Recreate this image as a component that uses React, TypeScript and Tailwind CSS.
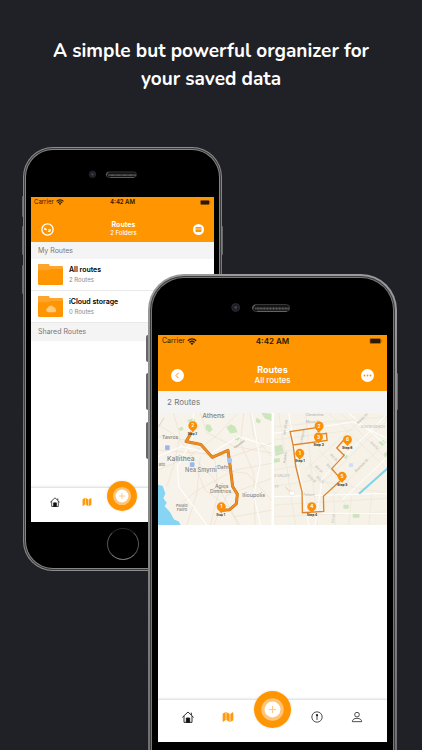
import type { ReactNode } from "react";
import clsx from "clsx";

type Size = "sm" | "lg";

export default function App() {
  return (
    <main className="h-screen overflow-hidden bg-[#202126] font-['Inter',sans-serif]">
      <h1 className="mx-auto max-w-[340px] pt-[37px] text-center font-['Nunito','Arial_Rounded_MT_Bold','Liberation_Sans',sans-serif] text-[19px] leading-7 font-bold text-white">
        A simple but powerful organizer for your saved data
      </h1>
      <div className="mx-auto mt-[54px] grid w-[376px] items-start">
        <Phone size="sm" className="col-start-1 row-start-1 justify-self-start">
          <FoldersScreen />
        </Phone>
        <Phone size="lg" className="z-10 col-start-1 row-start-1 mt-[127px] mr-0.5 justify-self-end">
          <MapsScreen />
        </Phone>
      </div>
    </main>
  );
}

function Phone({ size, className, children }: { size: Size; className: string; children: ReactNode }) {
  const lg = size === "lg";
  return (
    <div
      className={clsx(
        "relative",
        lg
          ? "w-[249px] rounded-[36px] bg-linear-to-b from-[#9a9a9a] via-[#858585] to-[#6a6a6a] p-0.5"
          : "w-[199px] rounded-[30px] bg-linear-to-b from-[#8c8c8c] via-[#6c6c6c] to-[#8c8c8c] p-px",
        className,
      )}
    >
      <SideKeys lg={lg} />
      <div className={clsx("bg-[#3c3c3c] p-px", lg ? "rounded-[34px]" : "rounded-[29px]")}>
        <div className={clsx("p-px", lg ? "rounded-[33px] bg-[#777]" : "rounded-[28px] bg-[#858585]")}>
          <div className={clsx("bg-black", lg ? "rounded-[32px] px-[6px]" : "rounded-[27px] px-[5px]")}>
            <Speaker lg={lg} />
            <div className={clsx("flex flex-col bg-white", lg ? "h-[407px]" : "h-[325px]")}>{children}</div>
            <div className={clsx("flex justify-center", lg ? "h-[58px] pt-2" : "h-[46px] pt-[6px]")}>
              <span
                className={clsx(
                  "rounded-full border border-t-[#2a2a2a] border-r-[#555] border-b-[#777] border-l-[#555]",
                  lg ? "size-10" : "size-8",
                )}
              />
            </div>
          </div>
        </div>
      </div>
    </div>
  );
}

function SideKeys({ lg }: { lg: boolean }) {
  return (
    <>
      <span className={clsx("absolute rounded-l bg-[#66676b]", lg ? "top-[61px] -left-0.5 h-[27px] w-0.5" : "top-[49px] -left-px h-[21px] w-px")} />
      <span className={clsx("absolute rounded-l bg-[#66676b]", lg ? "top-[99px] -left-0.5 h-[37px] w-0.5" : "top-[79px] -left-px h-[29px] w-px")} />
      <span className={clsx("absolute rounded-l bg-[#66676b]", lg ? "top-[148px] -left-0.5 h-[37px] w-0.5" : "top-[118px] -left-px h-[29px] w-px")} />
      <span className={clsx("absolute -right-px w-px rounded-r bg-[#66676b]", lg ? "top-[99px] h-[37px]" : "top-[79px] h-[29px]")} />
    </>
  );
}

function Speaker({ lg }: { lg: boolean }) {
  return (
    <svg viewBox="0 0 229 58" className={clsx("w-full", lg ? "h-[57px]" : "h-[47px]")} aria-hidden>
      <circle cx="77" cy="30" r="4" fill="#1d1d22" stroke="#2b2c32" />
      <circle cx="77" cy="30" r="1.5" fill="#3d4056" />
      <rect x="94" y="27" width="38" height="7" rx="3.5" fill="#141414" stroke="#3a3a3a" />
      <path d="M97 27.500q-3 1-2.500 4" fill="none" stroke="#777" />
      <path d="M97 31h34" stroke="#6a6a6a" strokeWidth="2" strokeDasharray="1 .5" />
      <path d="M99 34h30" stroke="#777" strokeWidth=".8" />
    </svg>
  );
}

function StatusBar({ size }: { size: Size }) {
  const lg = size === "lg";
  return (
    <div
      className={clsx(
        "grid grid-cols-3 items-center text-[#2b1900]",
        lg ? "h-3 px-1 leading-3" : "h-[10px] px-[3px] leading-[10px]",
      )}
    >
      <span className="flex items-center gap-0.5">
        <span className={lg ? "text-[7px]" : "text-[6px]"}>Carrier</span>
        <svg viewBox="0 0 18 13" className={lg ? "h-[7px] w-[10px]" : "h-[6px] w-2"} fill="none" stroke="currentColor" strokeWidth="2.4" aria-hidden>
          <path d="M1.2 5a11 11 0 0 1 15.6 0M4.2 8.2a7 7 0 0 1 9.6 0" />
          <path d="M6.3 10.2a4 4 0 0 1 5.4 0L9 13z" fill="currentColor" stroke="none" />
        </svg>
      </span>
      <span className={clsx("text-center font-semibold", lg ? "text-[8px]" : "text-[6px]")}>4:42 AM</span>
      <svg viewBox="0 0 28 13" className={clsx("justify-self-end", lg ? "h-[6px] w-[14px]" : "h-[5px] w-[11px]")} aria-hidden>
        <rect x=".5" y=".5" width="24" height="12" rx="3" fill="none" stroke="currentColor" strokeOpacity=".5" />
        <rect x="1.5" y="1.5" width="22" height="10" rx="2" fill="currentColor" />
        <path d="M26 4.5v4q1.6-.4 1.6-2t-1.6-2" fill="currentColor" fillOpacity=".5" />
      </svg>
    </div>
  );
}

function FoldersScreen() {
  return (
    <>
      <header className="h-[45px] bg-[#ff9501]">
        <StatusBar size="sm" />
        <div className="flex items-center justify-between px-[10px] pt-[14px]">
          <button type="button" aria-label="Sync" className="block size-[13px]">
            <svg viewBox="0 0 26 26" fill="none" stroke="#fff" strokeWidth="2.6">
              <circle cx="13" cy="13" r="11.2" />
              <path d="M7.5 14V9.500M7 10l4.500 4M18.500 12v4.500M19 16l-4.500-3M14 17h4.500" strokeWidth="2.2" />
            </svg>
          </button>
          <div className="text-center text-white">
            <h2 className="text-[7px] leading-2 font-bold">Routes</h2>
            <p className="text-[6px] leading-2 font-medium">2 Folders</p>
          </div>
          <button type="button" aria-label="New folder" className="block size-[11px]">
            <svg viewBox="0 0 22 22">
              <circle cx="11" cy="11" r="11" fill="#fff" />
              <rect x="5" y="6" width="12" height="10" rx="1.5" fill="#ff9501" />
              <path d="M5 10h12" stroke="#fff" strokeWidth="1.3" />
            </svg>
          </button>
        </div>
      </header>
      <div className="flex-1">
        <h3 className="bg-[#f4f4f4] px-[7px] text-[7px] leading-[17px] text-[#777]">My Routes</h3>
        <FolderRow title="All routes" text="2 Routes" />
        <FolderRow title="iCloud storage" text="0 Routes" cloud />
        <h3 className="bg-[#f4f4f4] px-[7px] text-[7px] leading-[18px] text-[#777]">Shared Routes</h3>
      </div>
      <TabBar size="sm" />
    </>
  );
}

function FolderRow({ title, text, cloud }: { title: string; text: string; cloud?: boolean }) {
  return (
    <button
      type="button"
      className="flex h-8 w-full items-center gap-[6px] border-b border-[#e9e9e9] px-[7px] text-left"
    >
      <svg viewBox="0 0 75 63" className="h-[21px] w-[25px]" aria-hidden>
        <path d="M0 4q0-4 4-4h26q4 0 4 4v3h37q4 0 4 4v48q0 4-4 4H4q-4 0-4-4z" fill="#ff9501" />
        <path d="M0 4q0-4 4-4h26q4 0 4 4v3h37q4 0 4 4v4H38q-4 4-8 4H0z" fill="#ffa52c" />
        {cloud && <path d="M29 49a7 7 0 0 1 0-13 9.5 9.5 0 0 1 17-3 7.5 7.5 0 0 1 7 8 5 5 0 0 1-3 8z" fill="#ffca80" />}
      </svg>
      <span>
        <span className="block text-[7px] leading-[10px] font-semibold text-black">{title}</span>
        <span className="block text-[6px] leading-[10px] text-[#8a8a8a]">{text}</span>
      </span>
    </button>
  );
}

function MapsScreen() {
  return (
    <>
      <header className="h-14 bg-[#ff9501]">
        <StatusBar size="lg" />
        <div className="flex items-center justify-between px-[13px] pt-[18px]">
          <button type="button" aria-label="Back" className="block size-[13px]">
            <svg viewBox="0 0 26 26" fill="none">
              <circle cx="13" cy="13" r="13" fill="#fff" />
              <path d="m15 7.5-5 5.5 5 5.5" stroke="#ff9501" strokeWidth="2" />
            </svg>
          </button>
          <div className="text-center text-white">
            <h2 className="text-[9px] leading-[10px] font-bold">Routes</h2>
            <p className="text-[8px] leading-[10px] font-medium">All routes</p>
          </div>
          <button type="button" aria-label="More" className="block size-[13px]">
            <svg viewBox="0 0 26 26">
              <circle cx="13" cy="13" r="13" fill="#fff" />
              <g fill="#ff9501">
                <circle cx="7" cy="13" r="1.8" />
                <circle cx="13" cy="13" r="1.8" />
                <circle cx="19" cy="13" r="1.8" />
              </g>
            </svg>
          </button>
        </div>
      </header>
      <div className="flex-1">
        <h3 className="bg-[#f4f4f4] px-[9px] text-[8px] leading-[22px] text-[#777]">2 Routes</h3>
        <div className="grid grid-cols-2 gap-0.5">
          <AthensMap />
          <CityMap />
        </div>
      </div>
      <TabBar size="lg" />
    </>
  );
}

function Pin({ x, y, n }: { x: number; y: number; n: number }) {
  return (
    <g>
      <path d={`M${x - 9} ${y + 8}L${x} ${y + 20}l9-12z`} fill="#fb9008" />
      <circle cx={x} cy={y} r="13.5" fill="#fb9008" />
      <text x={x} y={y + 5} textAnchor="middle" fontSize="14" fontWeight="700" fill="#fff">{n}</text>
    </g>
  );
}

function AthensMap() {
  return (
    <svg viewBox="24 69 339 336" preserveAspectRatio="xMidYMid slice" className="h-28 w-full" role="img" aria-label="Athens route">
      <rect x="24" y="69" width="339" height="336" fill="#f8f3ea" />
      <path
        d="m168 103 12 2 7 14-9 10-13-12zM85 116l10-6 6 8-9 6zM228 112l14-9 12 6 8 18-22 4zM332 69l31 3v22l-20-8zM318 84l14 8-6 10-10-6zM256 140l14 2-6 10-12-2zM110 92l20-8 6 10-14 8z"
        fill="#cbe6bb"
      />
      <path d="M24 284l14 4 8 22-6 14 10 14-6 10 16 18 12 22 14 6 6 11H24z" fill="#86d5f5" />
      <g fill="none" stroke="#eadfce" strokeWidth="2">
        <path d="m24 104 60 38 44 60 60 60 80 143M24 240l90-38 80-60 70-73M70 69l20 70-20 90-20 60M24 180l120 10 100 10 119-40M280 69l-10 90 40 90 4 156M363 220l-110 20-110 60-50 40M110 405l30-95 10-110M190 405l40-90 133-50M300 69l10 70 53 60M24 140l80 10 90 60 10 100-24 95" />
        <path d="m150 69 20 60 80 40 113 20M210 240l80 10 73 80M250 380l113-20M140 240l24 60 70 50 30 55" />
      </g>
      <path d="m42 84-18 30" stroke="#c9c3ba" strokeWidth="2" />
      <path
        d="m24 200 70-30 90 20 80-50 99 30M130 69l-4 80-44 80 4 60 84 116M330 405l-20-90 20-100-26-146"
        fill="none"
        stroke="#fff"
        strokeWidth="3"
      />
      <g fill="#9ab8ee">
        <rect x="45" y="166" width="14" height="14" rx="3" />
        <rect x="119" y="217" width="14" height="14" rx="3" />
      </g>
      <g fill="#858380" fontSize="15" fontWeight="500">
        <text x="156" y="85" fontSize="20">Athens</text>
        <text x="36" y="146">Tavros</text>
        <text x="51" y="212" fontSize="20">Kallithea</text>
        <text x="26" y="227" fontSize="13">ato</text>
        <text x="105" y="247" fontSize="17">Nea Smyrni</text>
        <text x="201" y="236">Dafni</text>
        <text x="194" y="294">Agios</text>
        <text x="179" y="308">Dimitrios</text>
        <text x="276" y="321" fontSize="16">Ilioupolis</text>
        <text x="78" y="351" fontSize="12">Palaio</text>
        <text x="80" y="363" fontSize="12">Faliro</text>
        <text x="253" y="176" fontSize="8" transform="rotate(-36 253 176)">Kaisariani</text>
      </g>
      <g fill="none" strokeLinejoin="round">
        <path d="m124 127-16 28 44 9 34 38 47-21 6 44 8 64 14 23-3 29-21 18-27 2" stroke="#c87418" strokeWidth="9" />
        <path d="m124 127-16 28 44 9 34 38 47-21 6 44 8 64 14 23-3 29-21 18-27 2" stroke="#ee8c20" strokeWidth="6" />
      </g>
      <rect x="231" y="204" width="14" height="15" rx="4" fill="#a9c2ef" />
      <g fontSize="9" fontWeight="700" fill="#333">
        <text x="113" y="136">Stop 2</text>
        <text x="198" y="377">Stop 1</text>
      </g>
      <Pin x={128} y={108} n={2} />
      <Pin x={213} y={350} n={1} />
    </svg>
  );
}

function CityMap() {
  return (
    <svg viewBox="15 69 342 336" preserveAspectRatio="xMidYMid slice" className="h-28 w-full" role="img" aria-label="City route">
      <rect x="15" y="69" width="342" height="336" fill="#f6f2e7" />
      <path
        d="m17 168 22-4 7 26-26 8zM252 369h20v14h-20zM224 344h16v12h-16zM328 156l16-6 8 12-12 6zM226 190l12 8-6 10-12-8zM346 190l11-6v16h-11zM15 206l18-2v12l-18 2z"
        fill="#cbe5c0"
      />
      <g fill="none" stroke="#ebe6dd" strokeWidth="2">
        <path d="m15 110 342-30M15 150l240-30M30 69l50 336M110 69l36 336M15 290l120-20 222 40M15 345l342-20M180 69l177 170M215 69l142 140M150 180l130 140M120 220l110 120M357 90 160 280M357 150 190 320M300 69 110 240M200 405l-6-100M240 405l8-85M300 405l10-100M15 380l342-14M15 240l80-14M15 190l65-12" />
      </g>
      <path
        d="m15 130 240-34 102 50M15 320l342-10M60 69l60 336M357 200 220 330M240 69l117 100M140 405l20-140 197-195M160 370h197"
        fill="none"
        stroke="#fff"
        strokeWidth="3"
      />
      <path d="m271 311 90-80" stroke="#7fd4ea" strokeWidth="6" />
      <g fill="#b0adab" fontSize="10">
        <text x="276" y="113">SOUTH BEACH</text>
        <text x="17" y="260">E VALLEY</text>
        <text x="111" y="79">Clementina</text>
        <text x="111" y="98">Minna St</text>
        <text x="17" y="293">YT</text>
        <text x="104" y="319">Folsom</text>
        <text x="50" y="135" transform="rotate(-82 50 135)">9th Street</text>
        <text x="50" y="220" transform="rotate(-82 50 220)">Potrero</text>
        <text x="100" y="158" transform="rotate(-78 100 158)">Langton</text>
        <text x="268" y="103" transform="rotate(-45 268 103)">Welsh St</text>
        <text x="262" y="247" transform="rotate(-45 262 247)">Brannan St</text>
        <text x="138" y="230" transform="rotate(45 138 230)">6th St</text>
        <text x="115" y="257" transform="rotate(45 115 257)">10th St</text>
        <text x="142" y="262" transform="rotate(45 142 262)">8th St</text>
        <text x="183" y="195" transform="rotate(45 183 195)">4th St</text>
        <text x="304" y="158" transform="rotate(45 304 158)">2nd St</text>
        <text x="172" y="225" transform="rotate(45 172 225)">5th St</text>
        <text x="196" y="400" transform="rotate(-86 196 400)">7th St</text>
      </g>
      <rect x="62" y="304" width="16" height="12" rx="3" fill="#fff" stroke="#ccc" />
      <path d="m50 291 14 14" stroke="#e9ad8a" strokeWidth="2" />
      <rect x="241" y="220" width="12" height="11" rx="2" fill="#cfddf5" />
      <path
        d="m148 126 1-14-85 13 9 40 102-14-2-21-24 4M73 165l8 64 19 77 1 62 64-4-1-45 54-50-29-33 37-40-22-22 26-30"
        fill="none"
        stroke="#e0842a"
        strokeWidth="4"
      />
      <g fontSize="10" fontWeight="700" fill="#333">
        <text x="79" y="217">Stop 1</text>
        <text x="134" y="168">Stop 3</text>
        <text x="114" y="377">Stop 4</text>
        <text x="205" y="287">Stop 5</text>
        <text x="220" y="177">Stop 6</text>
      </g>
      <Pin x={151} y={108} n={2} />
      <Pin x={149} y={141} n={3} />
      <Pin x={93} y={190} n={1} />
      <Pin x={129} y={350} n={4} />
      <Pin x={220} y={259} n={5} />
      <Pin x={236} y={149} n={6} />
    </svg>
  );
}

function TabBar({ size }: { size: Size }) {
  const lg = size === "lg";
  const icon = lg ? "size-3" : "size-[10px]";
  return (
    <nav
      className={clsx(
        "grid grid-cols-[4fr_4fr_5fr_4fr_4fr] border-t border-[#e4e4e4] bg-white shadow-[0_-1px_2px_#00000012]",
        lg ? "h-[43px] px-[10px]" : "h-[35px] px-2",
      )}
    >
      <TabButton label="Home" lg={lg}>
        <svg viewBox="0 0 36 36" className={icon} fill="none" stroke="#111" strokeWidth="2.6">
          <path d="M1 19 18 3l17 16M6 15v19h24V15M28 12V5" />
          <path d="M13 34V21h10v13z" fill="#111" />
        </svg>
      </TabButton>
      <TabButton label="Routes" lg={lg}>
        <svg viewBox="0 0 36 36" className={icon} fill="#ff9a0e">
          <path d="M2 10q0-2 2-3l7-4v24l-7 5q-2 1-2-1zM13 3l10 6v24l-10-6zM25 9l7-5q2-1 2 1v21q0 2-2 3l-7 4z" />
        </svg>
      </TabButton>
      <div className="flex justify-center">
        <button
          type="button"
          aria-label="Add"
          className={clsx("relative z-10 shrink-0 rounded-full shadow-[0_0_3px_#0000001f]", lg ? "-mt-[9px] size-[37px]" : "-mt-[7px] size-[30px]")}
        >
          <svg viewBox="0 0 112 112">
            <circle cx="56" cy="56" r="56" fill="#ff9501" />
            <circle cx="56" cy="56" r="34" fill="#ffc477" />
            <circle cx="56" cy="56" r="24" fill="#fff" />
            <path d="M56 45v22M45 56h22" stroke="#ffc98a" strokeWidth="3.5" />
          </svg>
        </button>
      </div>
      <TabButton label="Info" lg={lg}>
        <svg viewBox="0 0 36 36" className={icon} fill="none" stroke="#222" strokeWidth="2.4">
          <circle cx="18" cy="18" r="15.5" />
          <circle cx="18" cy="12.5" r="3.4" fill="#222" stroke="none" />
          <path d="M18 12v15" />
        </svg>
      </TabButton>
      <TabButton label="Profile" lg={lg}>
        <svg viewBox="0 0 36 36" className={icon} fill="none" stroke="#222" strokeWidth="2.4">
          <circle cx="18" cy="11" r="7" />
          <path d="M4 32c0-6 5-10 14-10s14 4 14 10z" />
        </svg>
      </TabButton>
    </nav>
  );
}

function TabButton({ label, lg, children }: { label: string; lg: boolean; children: ReactNode }) {
  return (
    <button type="button" aria-label={label} className={clsx("flex items-start justify-center", lg ? "pt-[11px]" : "pt-[9px]")}>
      {children}
    </button>
  );
}
